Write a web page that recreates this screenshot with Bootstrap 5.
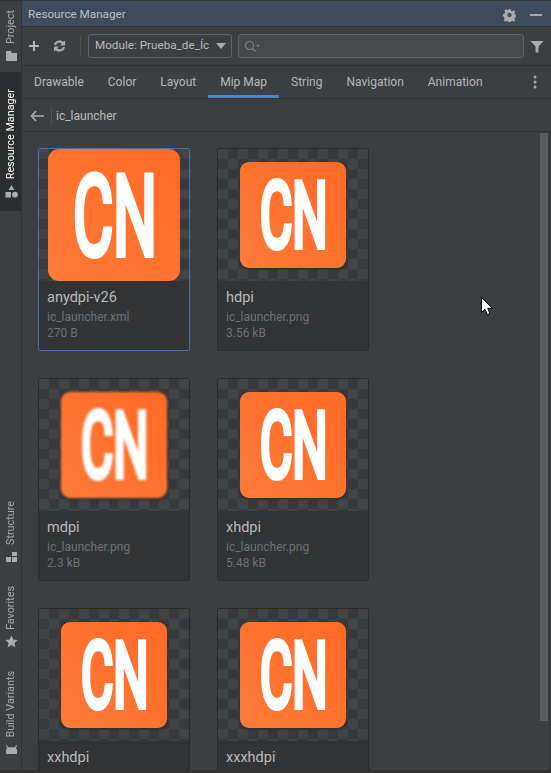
<!DOCTYPE html>
<html>
<head>
    <title>Resource Manager</title>
    <link href="https://cdn.jsdelivr.net/npm/bootstrap@5.3.3/dist/css/bootstrap.min.css" rel="stylesheet">
    <style>
        html, body {
            height: 100%;
            overflow: hidden;
        }

        body {
            background-color: #3c3f41;
            color: #bbbbbb;
            font-family: Roboto, "Liberation Sans", sans-serif;
            font-size: 12px;
        }

        .ide-window {
            height: 773px;
            border-top: 1px solid #323232;
            border-bottom: 3px solid #323232;
        }

        /* barra lateral */
        .side-bar {
            width: 22px;
            border-right: 1px solid #323232;
            flex-shrink: 0;
        }

        .side-item {
            display: flex;
            flex-direction: column-reverse;
            align-items: center;
            gap: 5px;
            padding-left: 2px;
            color: #a9abad;
            font-size: 10.8px;
        }

        .side-item span {
            writing-mode: vertical-rl;
            transform: rotate(180deg);
            line-height: 1;
            white-space: nowrap;
        }

        .side-item svg {
            width: 13px;
            height: 13px;
            flex-shrink: 0;
        }

        .side-project {
            height: 71px;
            padding-bottom: 10px;
        }

        .side-item.is-active {
            background-color: #2b2d2e;
            color: #ffffff;
            height: 139px;
            padding-bottom: 13px;
            gap: 6px;
        }

        .side-bottom {
            margin-top: auto;
            padding-bottom: 15px;
        }

        .side-bottom .side-item {
            margin-top: 23px;
        }

        /* paineis */
        .title-strip {
            height: 26px;
            background-color: #3d4b5c;
            padding: 2px 9px 0 6px;
            color: #b9c0c7;
            font-size: 11.7px;
            border-bottom: 1px solid #323232;
            flex-shrink: 0;
        }

        .tool-strip {
            height: 39px;
            border-bottom: 1px solid #323232;
            padding: 0 7px 0 6px;
            flex-shrink: 0;
        }

        .strip-sep {
            width: 1px;
            height: 20px;
            background-color: #515354;
            margin: 0 7px 0 14px;
        }

        .module-box {
            width: 144px;
            height: 24px;
            border: 1px solid #646464;
            border-radius: 3px;
            background-color: #3c3f41;
            padding: 0 5px 0 6px;
            color: #bbbbbb;
            font-size: 11.7px;
            white-space: nowrap;
        }

        .search-box {
            flex: 1;
            height: 24px;
            margin-left: 6px;
            border: 1px solid #646464;
            border-radius: 3px;
            background-color: #45494a;
            padding-left: 5px;
        }

        .tab-strip {
            height: 33px;
            border-bottom: 1px solid #323232;
            padding-left: 12px;
            flex-shrink: 0;
        }

        .tab-item {
            height: 32px;
            line-height: 33px;
            padding: 0 12px;
            color: #b4b6b8;
            white-space: nowrap;
        }

        .tab-first {
            padding-left: 0;
        }

        .tab-item.is-current {
            border-bottom: 3px solid #4a88c7;
            color: #bbbbbb;
        }

        .crumb-strip {
            height: 33px;
            border-bottom: 1px solid #323232;
            padding: 2px 0 0 8px;
            flex-shrink: 0;
        }

        .crumb-sep {
            width: 1px;
            height: 16px;
            background-color: #515354;
            margin: 0 4px 0 7px;
        }

        /* grade de recursos */
        .res-area {
            flex: 1;
            overflow: hidden;
            position: relative;
            padding: 16px 0 0 16px;
            border-right: 2px solid #343638;
        }

        .res-grid {
            display: grid;
            grid-template-columns: 152px 152px;
            grid-auto-rows: 203px;
            column-gap: 27px;
            row-gap: 27px;
        }

        .res-card {
            border: 1px solid #2b2b2b;
            border-radius: 2px;
            background-color: #313335;
            overflow: hidden;
        }

        .res-card.is-picked {
            border-color: #4b6eaf;
        }

        .res-preview {
            height: 132px;
            background-image: conic-gradient(#37393b 25%, #414345 0 50%, #37393b 0 75%, #414345 0);
            background-size: 20px 20px;
            display: flex;
            align-items: center;
            justify-content: center;
        }

        .res-logo {
            width: 106px;
            height: 106px;
            background: linear-gradient(45deg, #ff7a38, #ff6a25);
            border-radius: 9px;
            box-shadow: 0 1px 3px rgba(0, 0, 0, .35);
        }

        .res-logo svg {
            display: block;
            width: 100%;
            height: 100%;
        }

        .res-logo text {
            font-family: Roboto, sans-serif;
            font-size: 112px;
            fill: #ffffff;
            stroke: #ffffff;
            stroke-width: 5px;
            vector-effect: non-scaling-stroke;
        }

        .logo-big {
            width: 132px;
            height: 132px;
            border-radius: 11px;
            box-shadow: none;
        }

        .soft-1 {
            filter: blur(.7px);
        }

        .soft-2 {
            filter: blur(.4px);
        }

        .soft-3 {
            filter: blur(1.2px);
        }

        .res-info {
            padding: 7px 8px 6px;
        }

        .res-name {
            color: #bbbbbb;
            font-size: 14.5px;
            line-height: 20px;
            margin-bottom: 1px;
        }

        .res-meta {
            color: #6f7173;
            line-height: 16px;
        }

        .res-scroll {
            position: absolute;
            right: 1px;
            top: 1px;
            width: 8px;
            height: 588px;
            background-color: #5a5c5e;
        }

        .mouse-arrow {
            position: absolute;
            left: 481px;
            top: 296px;
        }
    </style>
</head>

<body>

<div class="ide-window d-flex position-relative">
    <!-- barra lateral -->
    <div class="side-bar d-flex flex-column">
        <div class="side-item side-project">
            <svg viewBox="0 0 13 13"><path d="M1 2h5l1 2h5v8H1z" fill="#a9abad"/></svg>
            <span>Project</span>
        </div>
        <div class="side-item is-active">
            <svg viewBox="0 0 13 13"><path d="M6.500 0l3 5h-6z" fill="#a9abad"/><rect x="0.500" y="7" width="5.500" height="5.500" fill="#a9abad"/><circle cx="10" cy="9.700" r="2.900" fill="#a9abad"/></svg>
            <span>Resource Manager</span>
        </div>
        <div class="side-bottom">
            <div class="side-item">
                <svg viewBox="0 0 13 13"><rect x="1" y="7" width="5" height="5" fill="#a9abad"/><rect x="7" y="2" width="5" height="4" fill="#a9abad"/><rect x="7" y="7" width="5" height="5" fill="#a9abad"/></svg>
                <span>Structure</span>
            </div>
            <div class="side-item">
                <svg viewBox="0 0 13 13"><path d="M6.500 .5l1.800 4.100 4.400.4-3.300 3 1 4.400-3.900-2.300-3.900 2.300 1-4.400L.3 5l4.400-.4z" fill="#a9abad"/></svg>
                <span>Favorites</span>
            </div>
            <div class="side-item">
                <svg viewBox="0 0 13 13"><path d="M1 12V8l1-2-1-3h1l1 2.200h7L11 3h1l-1 3 1 2v4z" fill="#a9abad"/></svg>
                <span>Build Variants</span>
            </div>
        </div>
    </div>

    <div class="flex-grow-1 d-flex flex-column" style="min-width:0">
        <!-- titulo -->
        <div class="title-strip d-flex align-items-center justify-content-between">
            <span>Resource Manager</span>
            <div class="d-flex align-items-center" style="gap:14px">
                <svg width="13" height="14" viewBox="0 0 14 14"><path fill="#a9abad" fill-rule="evenodd" d="M5.800.5h2.400l.4 1.800 1.300.6 1.600-1 1.700 1.700-1 1.600.6 1.300 1.800.4v2.400l-1.800.4-.6 1.300 1 1.600-1.700 1.700-1.600-1-1.300.6-.4 1.800H5.800l-.4-1.800-1.300-.6-1.600 1-1.700-1.700 1-1.600-.6-1.300L0 8.200V5.800l1.800-.4.6-1.300-1-1.600 1.700-1.700 1.600 1 1.300-.6zM7 4.700a2.300 2.300 0 1 0 0 4.600 2.300 2.300 0 0 0 0-4.600z"/></svg>
                <svg width="12" height="12" viewBox="0 0 12 12"><rect y="5" width="12" height="2" fill="#a9abad"/></svg>
            </div>
        </div>

        <!-- ferramentas -->
        <div class="tool-strip d-flex align-items-center">
            <svg width="12" height="12" viewBox="0 0 12 12"><path d="M5 1h2v4h4v2H7v4H5V7H1V5h4z" fill="#b4b6b8"/></svg>
            <svg width="13" height="14" viewBox="0 0 14 14" style="margin-left:13px"><path d="M1 6a6 6 0 0 1 10-3.500L13 1v5.500H7.500l2-2A3.800 3.800 0 0 0 3.200 6zM13 8a6 6 0 0 1-10 3.500L1 13V7.500h5.500l-2 2A3.800 3.800 0 0 0 10.800 8z" fill="#a9abad"/></svg>
            <div class="strip-sep"></div>
            <div class="module-box d-flex align-items-center justify-content-between">
                <span>Module: Prueba_de_Íc</span>
                <svg width="10" height="6" viewBox="0 0 10 6"><path d="M0 0h10L5 6z" fill="#a9abad"/></svg>
            </div>
            <div class="search-box d-flex align-items-center">
                <svg width="16" height="13" viewBox="0 0 16 13"><circle cx="5.500" cy="5.500" r="4" fill="none" stroke="#7f8183" stroke-width="1.200"/><path d="M8.500 8.500l3 3" stroke="#7f8183" stroke-width="1.300"/><path d="M12 5h4l-2 2z" fill="#7f8183"/></svg>
            </div>
            <svg width="14" height="13" viewBox="0 0 13 13" style="margin-left:6px"><path d="M0 1h13L8 6.500V12.500H5V6.500z" fill="#a9abad"/></svg>
        </div>

        <!-- abas -->
        <div class="tab-strip d-flex align-items-center">
            <div class="tab-item tab-first">Drawable</div>
            <div class="tab-item">Color</div>
            <div class="tab-item">Layout</div>
            <div class="tab-item is-current">Mip Map</div>
            <div class="tab-item">String</div>
            <div class="tab-item">Navigation</div>
            <div class="tab-item">Animation</div>
            <svg width="4" height="14" viewBox="0 0 4 14" class="ms-auto" style="margin-right:14px"><circle cx="2" cy="2" r="1.500" fill="#a9abad"/><circle cx="2" cy="7" r="1.500" fill="#a9abad"/><circle cx="2" cy="12" r="1.500" fill="#a9abad"/></svg>
        </div>

        <!-- caminho -->
        <div class="crumb-strip d-flex align-items-center">
            <svg width="14" height="12" viewBox="0 0 14 12"><path d="M6 1L1.500 6 6 11M2 6h12" fill="none" stroke="#a9abad" stroke-width="1.700"/></svg>
            <div class="crumb-sep"></div>
            <span>ic_launcher</span>
        </div>

        <!-- recursos -->
        <div class="res-area">
            <div class="res-grid">
                <div class="res-card is-picked">
                    <div class="res-preview"><div class="res-logo logo-big"><svg viewBox="0 0 132 132"><text transform="translate(25 106) scale(.55 1)">CN</text></svg></div></div>
                    <div class="res-info"><div class="res-name">anydpi-v26</div><div class="res-meta">ic_launcher.xml</div><div class="res-meta">270 B</div></div>
                </div>
                <div class="res-card">
                    <div class="res-preview"><div class="res-logo soft-1"><svg viewBox="0 0 132 132"><text transform="translate(25 106) scale(.55 1)">CN</text></svg></div></div>
                    <div class="res-info"><div class="res-name">hdpi</div><div class="res-meta">ic_launcher.png</div><div class="res-meta">3.56 kB</div></div>
                </div>
                <div class="res-card">
                    <div class="res-preview"><div class="res-logo soft-3"><svg viewBox="0 0 132 132"><text transform="translate(25 106) scale(.55 1)">CN</text></svg></div></div>
                    <div class="res-info"><div class="res-name">mdpi</div><div class="res-meta">ic_launcher.png</div><div class="res-meta">2.3 kB</div></div>
                </div>
                <div class="res-card">
                    <div class="res-preview"><div class="res-logo soft-2"><svg viewBox="0 0 132 132"><text transform="translate(25 106) scale(.55 1)">CN</text></svg></div></div>
                    <div class="res-info"><div class="res-name">xhdpi</div><div class="res-meta">ic_launcher.png</div><div class="res-meta">5.48 kB</div></div>
                </div>
                <div class="res-card">
                    <div class="res-preview"><div class="res-logo"><svg viewBox="0 0 132 132"><text transform="translate(25 106) scale(.55 1)">CN</text></svg></div></div>
                    <div class="res-info"><div class="res-name">xxhdpi</div></div>
                </div>
                <div class="res-card">
                    <div class="res-preview"><div class="res-logo"><svg viewBox="0 0 132 132"><text transform="translate(25 106) scale(.55 1)">CN</text></svg></div></div>
                    <div class="res-info"><div class="res-name">xxxhdpi</div></div>
                </div>
            </div>
            <div class="res-scroll"></div>
        </div>
    </div>

    <!-- cursor -->
    <svg class="mouse-arrow" width="13" height="20" viewBox="0 0 13 20"><path d="M.5.500v15l3.500-3.300 2.300 5.500 2.700-1.100-2.300-5.300h4.800z" fill="#ffffff" stroke="#000000" stroke-width="1"/></svg>
</div>

<script src="https://cdn.jsdelivr.net/npm/bootstrap@5.3.3/dist/js/bootstrap.bundle.min.js"></script>
</body>
</html>
